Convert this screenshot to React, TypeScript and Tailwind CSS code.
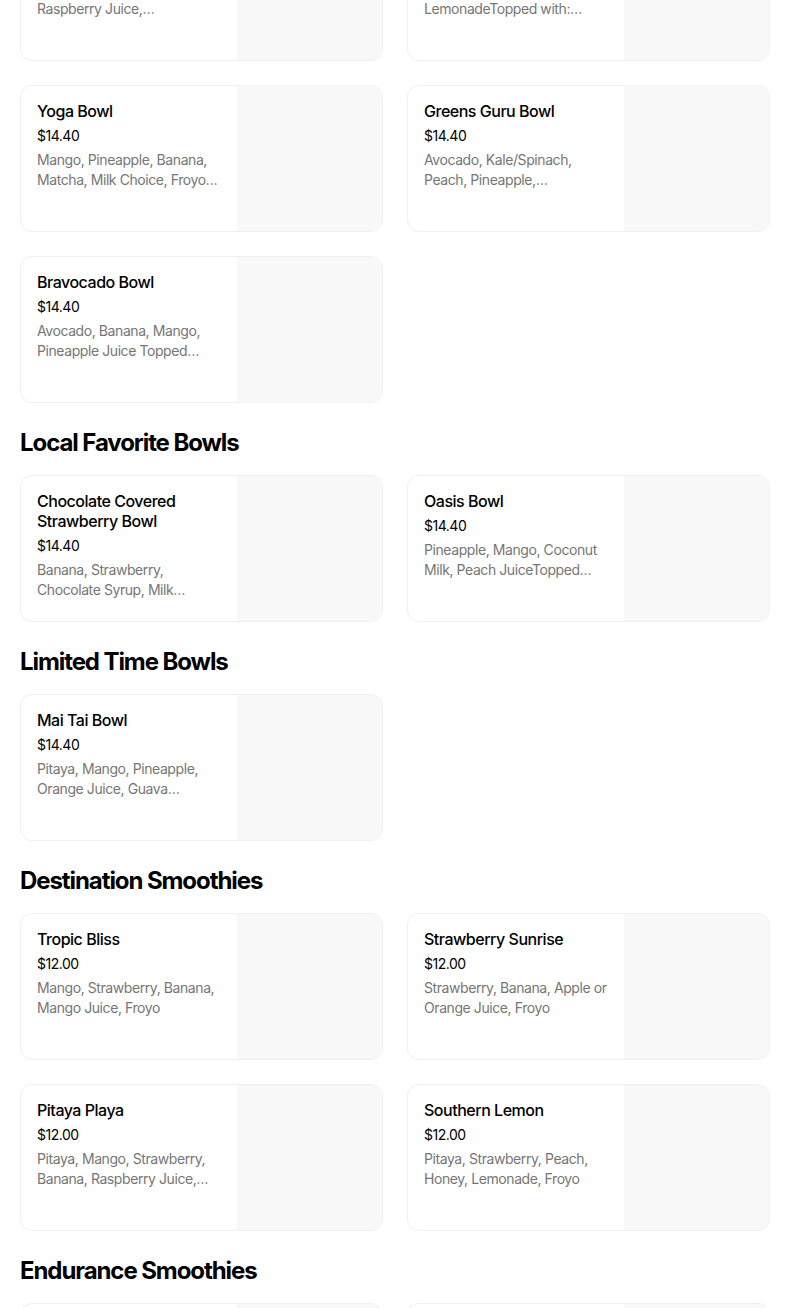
import React from "react";

type Item = { title: string[]; price: string; desc: [string, string] };

const Card = ({ item }: { item: Item }) => (
  <div className="flex h-[147px] w-[363px] overflow-hidden rounded-xl border border-[#f0f0f0] bg-white">
    <div className="flex w-[216px] shrink-0 flex-col px-4 pt-[15px]">
      <div className="text-[16px] font-medium leading-5 tracking-[-0.03em] text-black">
        {item.title.map((t, i) => (
          <div key={i} className="whitespace-nowrap">{t}</div>
        ))}
      </div>
      <div className="mt-[5px] text-[14px] leading-5 tracking-[-0.035em] text-black">{item.price}</div>
      <div className="mt-1 text-[14px] leading-5 tracking-[-0.03em] text-[#767676]">
        <div className="whitespace-nowrap">{item.desc[0]}</div>
        <div className="whitespace-nowrap">{item.desc[1]}</div>
      </div>
    </div>
    <div className="flex-1 bg-[#f8f8f8]" />
  </div>
);

const Grid = ({ items }: { items: Item[] }) => (
  <div className="grid grid-cols-[363px_363px] gap-6">
    {items.map((it, i) => (
      <Card key={i} item={it} />
    ))}
  </div>
);

const Heading = ({ children }: { children: React.ReactNode }) => (
  <h2 className="mt-6 mb-4 h-8 text-[24px] font-bold leading-8 tracking-[-0.045em] text-black">{children}</h2>
);

const first: Item[] = [
  { title: ["Pitaya Bowl"], price: "$14.40", desc: ["Pitaya, Mango, Banana,", "Raspberry Juice,…"] },
  { title: ["Acai Lemonade Bowl"], price: "$14.40", desc: ["Acai, Strawberry, Banana,", "LemonadeTopped with:…"] },
  { title: ["Yoga Bowl"], price: "$14.40", desc: ["Mango, Pineapple, Banana,", "Matcha, Milk Choice, Froyo…"] },
  { title: ["Greens Guru Bowl"], price: "$14.40", desc: ["Avocado, Kale/Spinach,", "Peach, Pineapple,…"] },
  { title: ["Bravocado Bowl"], price: "$14.40", desc: ["Avocado, Banana, Mango,", "Pineapple Juice Topped…"] },
];

const local: Item[] = [
  { title: ["Chocolate Covered", "Strawberry Bowl"], price: "$14.40", desc: ["Banana, Strawberry,", "Chocolate Syrup, Milk…"] },
  { title: ["Oasis Bowl"], price: "$14.40", desc: ["Pineapple, Mango, Coconut", "Milk, Peach JuiceTopped…"] },
];

const limited: Item[] = [
  { title: ["Mai Tai Bowl"], price: "$14.40", desc: ["Pitaya, Mango, Pineapple,", "Orange Juice, Guava…"] },
];

const destination: Item[] = [
  { title: ["Tropic Bliss"], price: "$12.00", desc: ["Mango, Strawberry, Banana,", "Mango Juice, Froyo"] },
  { title: ["Strawberry Sunrise"], price: "$12.00", desc: ["Strawberry, Banana, Apple or", "Orange Juice, Froyo"] },
  { title: ["Pitaya Playa"], price: "$12.00", desc: ["Pitaya, Mango, Strawberry,", "Banana, Raspberry Juice,…"] },
  { title: ["Southern Lemon"], price: "$12.00", desc: ["Pitaya, Strawberry, Peach,", "Honey, Lemonade, Froyo"] },
];

const endurance: Item[] = [
  { title: ["Protein Power"], price: "$12.00", desc: ["Banana, Peanut Butter,", "Protein, Milk Choice…"] },
  { title: ["Muscle Builder"], price: "$12.00", desc: ["Strawberry, Banana,", "Protein, Milk Choice…"] },
];

export default function App() {
  return (
    <div
      className="h-[1308px] overflow-hidden bg-white"
      style={{ fontFamily: "Inter, 'Noto Sans', Arial, sans-serif" }}
    >
      <div className="-mt-[86px] px-5">
        <Grid items={first} />
        <Heading>Local Favorite Bowls</Heading>
        <Grid items={local} />
        <Heading>Limited Time Bowls</Heading>
        <Grid items={limited} />
        <Heading>Destination Smoothies</Heading>
        <Grid items={destination} />
        <Heading>Endurance Smoothies</Heading>
        <Grid items={endurance} />
      </div>
    </div>
  );
}
